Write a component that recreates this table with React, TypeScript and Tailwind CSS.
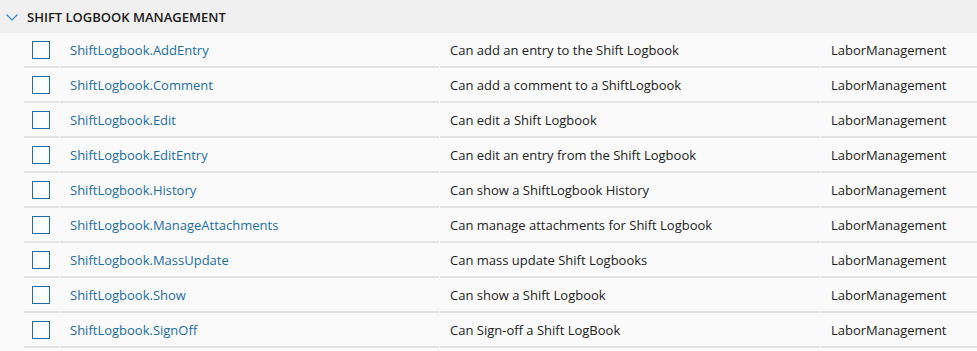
const rows = [
  ["ShiftLogbook.AddEntry", "Can add an entry to the Shift Logbook"],
  ["ShiftLogbook.Comment", "Can add a comment to a ShiftLogbook"],
  ["ShiftLogbook.Edit", "Can edit a Shift Logbook"],
  ["ShiftLogbook.EditEntry", "Can edit an entry from the Shift Logbook"],
  ["ShiftLogbook.History", "Can show a ShiftLogbook History"],
  ["ShiftLogbook.ManageAttachments", "Can manage attachments for Shift Logbook"],
  ["ShiftLogbook.MassUpdate", "Can mass update Shift Logbooks"],
  ["ShiftLogbook.Show", "Can show a Shift Logbook"],
  ["ShiftLogbook.SignOff", "Can Sign-off a Shift LogBook"],
];

export default function App() {
  return (
    <div className="min-h-screen w-[977px] bg-[#fafafa] font-['Open_Sans',sans-serif] text-[13px]">
      {/* group header */}
      <div className="flex h-[33px] items-center bg-[#f0f0f0] pt-[2px]">
        <svg width="12" height="7" viewBox="0 0 12 7" className="ml-[6px]">
          <path d="M0.5 0.5 L6 6 L11.5 0.5" fill="none" stroke="#3b87c4" strokeWidth="1.2" />
        </svg>
        <span className="ml-[9px] font-semibold uppercase text-[#1b1b1b]">Shift Logbook Management</span>
      </div>

      <div className="pl-6">
        {rows.map(([name, desc]) => (
          <div key={name} className="flex h-[35px]">
            <div className="mr-px flex w-[35px] items-center border-b-2 border-[#e2e2e2] pl-2 pt-px">
              <span className="block h-[18px] w-[18px] border-[1.5px] border-[#1c6ea4] bg-white" />
            </div>
            <div className="mr-px flex w-[379px] items-center border-b-2 border-[#e2e2e2] pl-[10px] pt-[3px] text-[#1c6ea4]">
              {name}
            </div>
            <div className="mr-px flex w-[380px] items-center border-b-2 border-[#e2e2e2] pl-[10px] pt-[3px] text-[#222]">
              {desc}
            </div>
            <div className="flex flex-1 items-center border-b-2 border-[#e2e2e2] pl-[10px] pt-[3px] text-[#222]">
              LaborManagement
            </div>
          </div>
        ))}
      </div>
    </div>
  );
}
